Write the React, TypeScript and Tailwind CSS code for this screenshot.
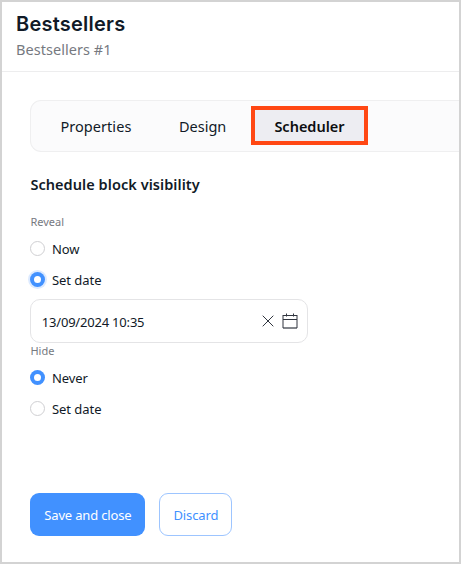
type RadioProps = { label: string; checked?: boolean; focused?: boolean };

function Radio({ label, checked, focused }: RadioProps) {
  return (
    <label className="flex h-[31px] items-center">
      <span
        className={`mr-[6.5px] flex size-[15px] items-center justify-center rounded-full ${
          checked ? "bg-[#4191ff]" : "border border-[#cfcfd2] bg-white"
        } ${focused ? "shadow-[0_0_0_2px_#dceaff]" : ""}`}
      >
        {checked && <span className="size-[7px] rounded-full bg-white" />}
      </span>
      <span className="text-[13px] leading-5 tracking-[-0.04px]">{label}</span>
    </label>
  );
}

export default function App() {
  return (
    <div className="flex h-[564px] w-[461px] flex-col overflow-hidden border-2 border-[#d3d3d3] bg-white font-['Noto_Sans',sans-serif] text-[#111a27]">
      <header className="h-[70px] shrink-0 border-b border-[#ededee] pl-[14px] pt-[9px]">
        <h1 className="font-['Inter',sans-serif] text-[20px] font-semibold leading-[26px] tracking-[0.22px]">Bestsellers</h1>
        <p className="text-[14.5px] leading-[24px] tracking-[0.05px] text-[#76797f]">Bestsellers #1</p>
      </header>

      <main className="flex flex-col pl-[28.4px] pt-[28px]">
        <nav className="flex h-[52px] items-center rounded-l-[11px] border border-r-0 border-[#efeff0] bg-[#fbfbfc] pb-px text-[14.5px]">
          <span className="ml-[29px] w-[118.6px] pt-[2px] tracking-[0.06px]">Properties</span>
          <span className="w-[72px] pt-[2px]">Design</span>
          <span className="flex h-[39px] w-[117px] items-center justify-center border-4 border-[#ff4713] bg-[#ededf2] pt-[3px] font-semibold text-[#0c0d10]">
            Scheduler
          </span>
        </nav>

        <h2 className="mt-[22px] text-[14.5px] font-semibold leading-5 tracking-[0.06px]">Schedule block visibility</h2>

        <p className="mt-[20px] text-[11px] leading-4 text-[#76797f]">Reveal</p>
        <div className="mt-[3px]">
          <Radio label="Now" />
          <Radio label="Set date" checked focused />
        </div>

        <div className="mt-[4px] flex h-[44px] w-[277.6px] items-center rounded-[10px] border border-[#e4e4e6] pl-[10.4px] pr-[9px]">
          <span className="flex-1 pt-[3px] text-[13px] tracking-[-0.2px]">13/09/2024 10:35</span>
          <svg className="mr-[8px] size-[12px]" viewBox="0 0 12 12" fill="none" stroke="#30353f" strokeWidth="1">
            <path d="M.7.7 11.3 11.3M11.3.7.7 11.3" />
          </svg>
          <svg className="size-[16px]" viewBox="0 0 16 16" fill="none" stroke="#30353f" strokeWidth="1">
            <path d="M1 2.5h14M1 2v13M15 2v13M1 6.5h14M4.5.5v3M11.5.5v3" />
            <path d="M1 15h14" strokeWidth="1.2" />
          </svg>
        </div>

        <p className="text-[11px] leading-4 text-[#76797f]">Hide</p>
        <div className="mt-[3px]">
          <Radio label="Never" checked />
          <Radio label="Set date" />
        </div>

        <div className="mt-[69px] flex gap-[14px] text-[13px] tracking-[-0.17px]">
          <button className="h-[43px] w-[115px] rounded-[9px] bg-[#4191ff] pt-[2px] text-white">Save and close</button>
          <button className="h-[43px] w-[73px] rounded-[9px] border border-[#9dc5ff] pt-[2px] tracking-[-0.1px] text-[#4191ff]">Discard</button>
        </div>
      </main>
    </div>
  );
}
